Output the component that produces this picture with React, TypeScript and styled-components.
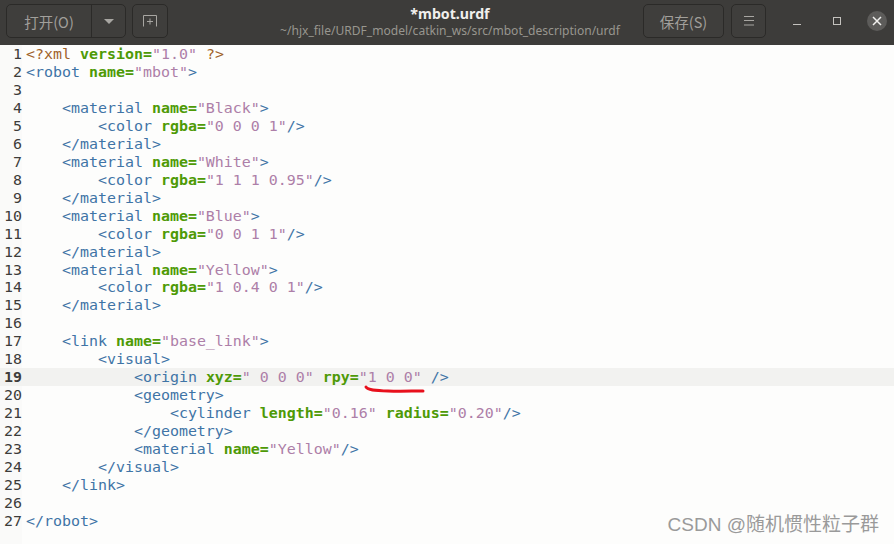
import styled, { createGlobalStyle } from 'styled-components';

const GlobalStyle = createGlobalStyle`
	html, body {
		margin: 0;
		padding: 0;
		background: #fdfdfc;
	}
	#root {
		width: 894px;
		height: 544px;
		overflow: hidden;
	}
`;

type Token = { k: 't' | 'a' | 'v' | 'p'; s: string };

const t = (s: string): Token => ({ k: 't', s });
const a = (s: string): Token => ({ k: 'a', s });
const v = (s: string): Token => ({ k: 'v', s });
const p = (s: string): Token => ({ k: 'p', s });

const lines: Token[][] = [
	[p('<?xml '), a('version='), v('"1.0"'), p(' ?>')],
	[t('<robot '), a('name='), v('"mbot"'), t('>')],
	[],
	[t('    <material '), a('name='), v('"Black"'), t('>')],
	[t('        <color '), a('rgba='), v('"0 0 0 1"'), t('/>')],
	[t('    </material>')],
	[t('    <material '), a('name='), v('"White"'), t('>')],
	[t('        <color '), a('rgba='), v('"1 1 1 0.95"'), t('/>')],
	[t('    </material>')],
	[t('    <material '), a('name='), v('"Blue"'), t('>')],
	[t('        <color '), a('rgba='), v('"0 0 1 1"'), t('/>')],
	[t('    </material>')],
	[t('    <material '), a('name='), v('"Yellow"'), t('>')],
	[t('        <color '), a('rgba='), v('"1 0.4 0 1"'), t('/>')],
	[t('    </material>')],
	[],
	[t('    <link '), a('name='), v('"base_link"'), t('>')],
	[t('        <visual>')],
	[t('            <origin '), a('xyz='), v('" 0 0 0"'), t(' '), a('rpy='), v('"1 0 0"'), t(' />')],
	[t('            <geometry>')],
	[t('                <cylinder '), a('length='), v('"0.16"'), t(' '), a('radius='), v('"0.20"'), t('/>')],
	[t('            </geometry>')],
	[t('            <material '), a('name='), v('"Yellow"'), t('/>')],
	[t('        </visual>')],
	[t('    </link>')],
	[],
	[t('</robot>')],
];

const CURRENT_LINE = 19;

const Window = styled.div`
	position: relative;
	width: 894px;
	height: 544px;
	display: flex;
	flex-direction: column;
	background: #fdfdfc;
	overflow: hidden;
`;

const HeaderBar = styled.header`
	height: 45px;
	flex: none;
	display: grid;
	grid-template-columns: 1fr auto 1fr;
	align-items: start;
	padding: 4px 6px 0;
	box-sizing: border-box;
	background: #3d3c3a;
	font-family: 'Noto Sans', 'Noto Sans CJK SC', sans-serif;
`;

const HeaderGroup = styled.div<{ $end?: boolean }>`
	display: flex;
	align-items: flex-start;
	justify-content: ${({ $end }) => ($end ? 'flex-end' : 'flex-start')};
`;

const ButtonBox = styled.div<{ $width: number; $gap?: number }>`
	width: ${({ $width }) => $width}px;
	height: 34px;
	flex: none;
	margin-left: ${({ $gap }) => $gap ?? 0}px;
	box-sizing: border-box;
	display: flex;
	align-items: center;
	justify-content: center;
	border: 1px solid #2b2a28;
	border-radius: 5px;
	background: #3f3e3c;
	color: #a19f9b;
	font-size: 14.5px;
	font-family: 'Noto Sans CJK SC', 'Noto Sans', sans-serif;
`;

const SplitButton = styled(ButtonBox)`
	justify-content: flex-start;
`;

const SplitMain = styled.div`
	width: 84px;
	height: 100%;
	display: flex;
	align-items: center;
	justify-content: center;
	border-right: 1px solid #2b2a28;
`;

const SplitArrow = styled.div`
	flex: 1;
	display: flex;
	justify-content: center;
`;

const Caret = styled.span`
	width: 0;
	height: 0;
	border-left: 5px solid transparent;
	border-right: 5px solid transparent;
	border-top: 5px solid #a8a6a2;
`;

const TitleBlock = styled.div`
	display: flex;
	flex-direction: column;
	align-items: center;
	padding: 1px 0 0 6px;
`;

const Title = styled.div`
	color: #f0efed;
	font-size: 14.2px;
	font-weight: 700;
	line-height: 18px;
`;

const Subtitle = styled.div`
	color: #98968f;
	font-size: 12.07px;
	line-height: 16px;
	white-space: nowrap;
`;

const WindowControls = styled.div`
	display: flex;
	align-items: center;
	height: 34px;
	margin-left: 21px;
	margin-right: 1px;
	gap: 20px;
`;

const ControlSlot = styled.div<{ $closing?: boolean }>`
	width: 20px;
	height: 20px;
	display: flex;
	align-items: center;
	justify-content: center;
	border-radius: 50%;
	background: ${({ $closing }) => ($closing ? '#5d5c5a' : 'transparent')};
`;

const Editor = styled.main`
	flex: 1;
	display: flex;
	align-items: flex-start;
	font-family: 'DejaVu Sans Mono', monospace;
	font-size: 14.95px;
	line-height: 18px;
	white-space: pre;
`;

const Gutter = styled.div`
	width: 22px;
	flex: none;
	background: #fafaf9;
	padding-top: 0.3px;
	min-height: 499px;
`;

const LineNumber = styled.div<{ $current?: boolean }>`
	height: 17.94px;
	text-align: right;
	color: #3d3c3a;
	font-weight: ${({ $current }) => ($current ? 700 : 400)};
	background: ${({ $current }) => ($current ? '#f2f2f0' : 'transparent')};
`;

const Code = styled.div`
	flex: 1;
	padding-top: 0.3px;
`;

const CodeLine = styled.div<{ $current?: boolean }>`
	height: 17.94px;
	padding-left: 4px;
	background: ${({ $current }) => ($current ? '#f2f2f0' : 'transparent')};
`;

const Piece = styled.span<{ $kind: Token['k'] }>`
	color: ${({ $kind }) =>
		$kind === 't' ? '#3f74a6' : $kind === 'a' ? '#4e9a06' : $kind === 'v' ? '#ad7fa8' : '#a0622a'};
	font-weight: ${({ $kind }) => ($kind === 'a' ? 700 : 400)};
`;

const RedMark = styled.svg`
	position: absolute;
	left: 360px;
	top: 382px;
`;

const Watermark = styled.div`
	position: absolute;
	right: 15px;
	top: 514px;
	color: #9a9a9a;
	font-family: 'Liberation Sans', 'Noto Sans CJK SC', sans-serif;
	font-size: 19px;
	line-height: 22px;
	white-space: nowrap;
`;

const App = () => {
	return (
		<Window>
			<GlobalStyle />
			<HeaderBar>
				<HeaderGroup>
					<SplitButton $width={120}>
						<SplitMain>打开(O)</SplitMain>
						<SplitArrow>
							<Caret />
						</SplitArrow>
					</SplitButton>
					<ButtonBox $width={36} $gap={6}>
						<svg width='16' height='14' viewBox='0 0 16 14' fill='none' stroke='#a8a6a2'>
							<path d='M1.5 12.5 V1.5 H14.5 V12.5' />
							<path d='M8 4.5 V10.5 M5 7.5 H11' />
						</svg>
					</ButtonBox>
				</HeaderGroup>
				<TitleBlock>
					<Title>*mbot.urdf</Title>
					<Subtitle>~/hjx_file/URDF_model/catkin_ws/src/mbot_description/urdf</Subtitle>
				</TitleBlock>
				<HeaderGroup $end>
					<ButtonBox $width={81}>保存(S)</ButtonBox>
					<ButtonBox $width={35} $gap={7}>
						<svg width='12' height='12' viewBox='0 0 12 12' fill='none' stroke='#a8a6a2'>
							<path d='M1 1.5 H11 M1 5.5 H11 M1 10 H11' />
						</svg>
					</ButtonBox>
					<WindowControls>
						<ControlSlot>
							<svg width='16' height='16' viewBox='0 0 16 16' fill='none' stroke='#c4c2be'>
								<path d='M4 11.5 H12' />
							</svg>
						</ControlSlot>
						<ControlSlot>
							<svg width='16' height='16' viewBox='0 0 16 16' fill='none' stroke='#c4c2be'>
								<rect x='4.5' y='4.5' width='7' height='7' />
							</svg>
						</ControlSlot>
						<ControlSlot $closing>
							<svg width='12' height='12' viewBox='0 0 12 12' fill='none' stroke='#f2f1ef' strokeWidth='1.5'>
								<path d='M2 2 L10 10 M10 2 L2 10' />
							</svg>
						</ControlSlot>
					</WindowControls>
				</HeaderGroup>
			</HeaderBar>
			<Editor>
				<Gutter>
					{lines.map((_, i) => (
						<LineNumber key={i} $current={i + 1 === CURRENT_LINE}>
							{i + 1}
						</LineNumber>
					))}
				</Gutter>
				<Code>
					{lines.map((line, i) => (
						<CodeLine key={i} $current={i + 1 === CURRENT_LINE}>
							{line.map((piece, j) => (
								<Piece key={j} $kind={piece.k}>
									{piece.s}
								</Piece>
							))}
						</CodeLine>
					))}
				</Code>
			</Editor>
			<RedMark width='66' height='14' viewBox='0 0 66 14' fill='none'>
				<path d='M6 5 C8 8 14 8.5 28 9 C40 9.5 52 9 63 9' stroke='#e8101c' strokeWidth='3' strokeLinecap='round' />
			</RedMark>
			<Watermark>CSDN @随机惯性粒子群</Watermark>
		</Window>
	);
};

export default App;
